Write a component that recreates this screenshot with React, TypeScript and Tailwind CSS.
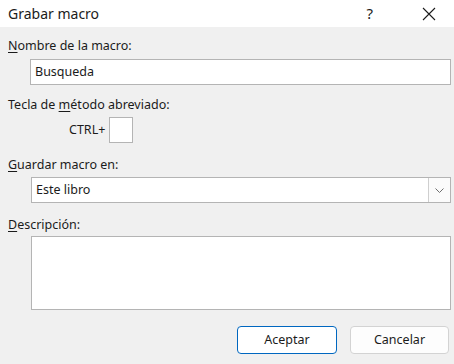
import React from 'react';

const font = { fontFamily: '"Noto Sans", "Open Sans", sans-serif' };

function Label({ u, rest }: { u: string; rest: string }) {
  return (
    <div className="h-4 text-[12.5px] leading-4 text-[#1b1b1b]">
      <span className="underline underline-offset-2">{u}</span>
      {rest}
    </div>
  );
}

export default function App() {
  return (
    <div className="flex h-[364px] w-[454px] flex-col bg-[#f0f0f0]" style={font}>
      {/* Title bar */}
      <div className="flex h-[27px] items-center bg-white pl-2">
        <span className="text-[14px] text-[#1b1b1b]">Grabar macro</span>
        <span className="ml-auto mr-[49px] text-[15px] text-[#1b1b1b]">?</span>
        <svg width="14" height="14" viewBox="0 0 14 14" className="mr-[18px]">
          <path d="M1 1 L13 13 M13 1 L1 13" stroke="#1b1b1b" strokeWidth="1.1" />
        </svg>
      </div>

      <div className="flex flex-col pl-2 pr-[3px]">
        <div className="mt-[11px]">
          <Label u="N" rest="ombre de la macro:" />
        </div>
        <div className="ml-[22px] mt-[5px] flex h-[26px] items-center border border-[#b4b4b4] bg-white pl-1 text-[12.5px] text-[#1b1b1b]">
          Busqueda
        </div>

        <div className="mt-3 h-4 text-[12.5px] leading-4 text-[#1b1b1b]">
          Tecla de <span className="underline underline-offset-2">m</span>étodo abreviado:
        </div>
        <div className="mt-1 flex items-center">
          <span className="ml-[61px] text-[12.5px] text-[#1b1b1b]">CTRL+</span>
          <div className="ml-[4px] h-[26px] w-6 border border-[#b4b4b4] bg-white" />
        </div>

        <div className="mt-[14px]">
          <Label u="G" rest="uardar macro en:" />
        </div>
        <div className="ml-[23px] mt-1 flex h-[26px] border border-[#b4b4b4] bg-white">
          <div className="flex flex-1 items-center pl-1 text-[12.5px] text-[#1b1b1b]">Este libro</div>
          <div className="flex w-[22px] items-center justify-center border-l border-[#cfcfcf] bg-[#fbfbfb]">
            <svg width="9" height="5" viewBox="0 0 9 5">
              <path d="M0.5 0.5 L4.5 4.5 L8.5 0.5" stroke="#6e6e6e" fill="none" strokeWidth="1" />
            </svg>
          </div>
        </div>

        <div className="mt-[14px]">
          <Label u="D" rest="escripción:" />
        </div>
        <div className="ml-[23px] mt-[3px] h-[74px] border border-[#b4b4b4] bg-white" />

        <div className="mt-4 flex justify-end gap-[13px] pr-[2px]">
          <button className="h-[28px] w-[100px] rounded-[4px] border border-[#0067c0] bg-white text-[12.5px] text-[#1b1b1b]">
            Aceptar
          </button>
          <button className="h-[28px] w-[99px] rounded-[4px] border border-[#d3d3d3] bg-[#fdfdfd] text-[12.5px] text-[#1b1b1b]">
            Cancelar
          </button>
        </div>
      </div>
    </div>
  );
}
